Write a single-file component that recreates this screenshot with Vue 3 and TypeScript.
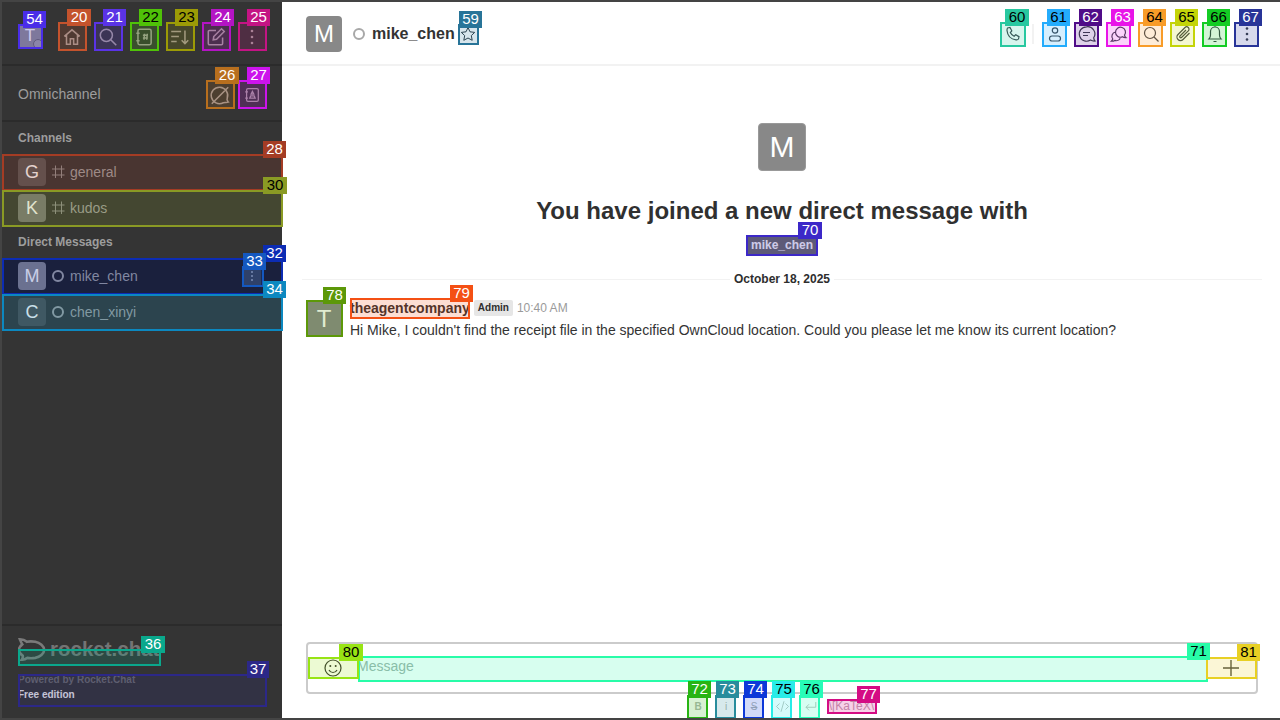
<script setup lang="ts">
interface Mark { n: string; x: number; y: number; w: number; h: number; c: string; dark?: boolean; lx: number; ly: number; lw: number }
const marks: Mark[] = [
  { n: '54', x: 18, y: 24, w: 25, h: 25, c: '#4a2de8', lx: 23, ly: 11, lw: 23 },
  { n: '20', x: 58, y: 22, w: 29, h: 29, c: '#c4532d', lx: 67, ly: 9, lw: 24 },
  { n: '21', x: 94, y: 22, w: 29, h: 29, c: '#5a33e6', lx: 103, ly: 9, lw: 23 },
  { n: '22', x: 130, y: 22, w: 29, h: 29, c: '#4fc208', dark: true, lx: 139, ly: 9, lw: 23 },
  { n: '23', x: 166, y: 22, w: 29, h: 29, c: '#9c9b06', dark: true, lx: 175, ly: 9, lw: 23 },
  { n: '24', x: 202, y: 22, w: 29, h: 29, c: '#b414c4', lx: 211, ly: 9, lw: 23 },
  { n: '25', x: 238, y: 22, w: 29, h: 29, c: '#c41484', lx: 247, ly: 9, lw: 23 },
  { n: '26', x: 206, y: 80, w: 29, h: 29, c: '#b86f1e', lx: 215, ly: 67, lw: 24 },
  { n: '27', x: 238, y: 80, w: 29, h: 29, c: '#cc14ec', lx: 247, ly: 67, lw: 23 },
  { n: '28', x: 2, y: 154, w: 281, h: 37, c: '#a43c24', lx: 263, ly: 141, lw: 23 },
  { n: '30', x: 2, y: 190, w: 281, h: 37, c: '#8a9a24', dark: true, lx: 263, ly: 177, lw: 24 },
  { n: '32', x: 2, y: 258, w: 281, h: 37, c: '#0c2cb4', lx: 263, ly: 245, lw: 23 },
  { n: '33', x: 242, y: 266, w: 22, h: 21, c: '#1458c0', lx: 243, ly: 253, lw: 23 },
  { n: '34', x: 2, y: 294, w: 281, h: 37, c: '#0c88c0', lx: 263, ly: 281, lw: 23 },
  { n: '36', x: 18, y: 649, w: 143, h: 17, c: '#0aa88c', lx: 141, ly: 636, lw: 24 },
  { n: '37', x: 18, y: 674, w: 249, h: 33, c: '#2c2888', lx: 247, ly: 661, lw: 22 },
  { n: '59', x: 458, y: 24, w: 21, h: 21, c: '#287498', lx: 459, ly: 11, lw: 23 },
  { n: '60', x: 1000, y: 22, w: 26, h: 25, c: '#28c8a0', dark: true, lx: 1005, ly: 9, lw: 24 },
  { n: '61', x: 1042, y: 22, w: 25, h: 25, c: '#24acfc', dark: true, lx: 1047, ly: 9, lw: 23 },
  { n: '62', x: 1074, y: 22, w: 25, h: 25, c: '#500c88', lx: 1079, ly: 9, lw: 23 },
  { n: '63', x: 1106, y: 22, w: 25, h: 25, c: '#e814e8', lx: 1111, ly: 9, lw: 23 },
  { n: '64', x: 1138, y: 22, w: 25, h: 25, c: '#f89c28', dark: true, lx: 1143, ly: 9, lw: 23 },
  { n: '65', x: 1170, y: 22, w: 25, h: 25, c: '#c4d408', dark: true, lx: 1175, ly: 9, lw: 23 },
  { n: '66', x: 1202, y: 22, w: 25, h: 25, c: '#14cc24', dark: true, lx: 1207, ly: 9, lw: 23 },
  { n: '67', x: 1234, y: 22, w: 25, h: 25, c: '#283498', lx: 1239, ly: 9, lw: 23 },
  { n: '70', x: 746, y: 235, w: 72, h: 21, c: '#3c28c8', lx: 798, ly: 222, lw: 24 },
  { n: '71', x: 358, y: 656, w: 850, h: 26, c: '#28fca8', dark: true, lx: 1187, ly: 643, lw: 23 },
  { n: '72', x: 687, y: 695, w: 21, h: 24, c: '#28b414', lx: 688, ly: 681, lw: 23 },
  { n: '73', x: 715, y: 695, w: 21, h: 24, c: '#288c9c', lx: 716, ly: 681, lw: 23 },
  { n: '74', x: 743, y: 695, w: 21, h: 24, c: '#0c38d8', lx: 744, ly: 681, lw: 23 },
  { n: '75', x: 771, y: 695, w: 21, h: 24, c: '#28ece8', dark: true, lx: 772, ly: 681, lw: 23 },
  { n: '76', x: 799, y: 695, w: 21, h: 24, c: '#28fcb8', dark: true, lx: 800, ly: 681, lw: 23 },
  { n: '77', x: 827, y: 699, w: 50, h: 15, c: '#d40c84', lx: 857, ly: 686, lw: 23 },
  { n: '78', x: 306, y: 300, w: 37, h: 37, c: '#5c9808', lx: 323, ly: 287, lw: 23 },
  { n: '79', x: 350, y: 298, w: 120, h: 21, c: '#f45014', lx: 450, ly: 285, lw: 23 },
  { n: '80', x: 308, y: 657, w: 51, h: 22, c: '#98e414', dark: true, lx: 339, ly: 644, lw: 24 },
  { n: '81', x: 1206, y: 657, w: 51, h: 22, c: '#e8d024', dark: true, lx: 1237, ly: 644, lw: 23 },
]
const tint = (c: string): string => c + '30'
</script>

<template>
  <div class="frame">
    <aside class="side">
      <div class="top-bar">
        <div class="me"><span class="me-t">T</span><span class="me-dot"></span></div>
        <div class="tools">
          <span class="tool"><svg viewBox="0 0 20 20"><path d="M3 9.500 10 3.500l7 6M5 8v8.500h3.500v-5h3v5H15V8" /></svg></span>
          <span class="tool"><svg viewBox="0 0 20 20"><circle cx="8.500" cy="8.500" r="5.500" /><path d="m12.500 12.500 5 5" /></svg></span>
          <span class="tool"><svg viewBox="0 0 20 20"><rect x="4.500" y="3" width="12" height="14" rx="1.500" /><path d="M3 6.500h3M3 13.500h3M9 8.500h4.500M9 11h4.500M10.500 7l-.5 5.500M13 7l-.5 5.500" /></svg></span>
          <span class="tool"><svg viewBox="0 0 20 20"><path d="M2 5h9M2 9.500h7M2 14h5M14.500 4v12M11.500 13l3 3 3-3" /></svg></span>
          <span class="tool"><svg viewBox="0 0 20 20"><path d="M16 10.500V16a1 1 0 0 1-1 1H4a1 1 0 0 1-1-1V5a1 1 0 0 1 1-1h6" /><path d="m8 9.500 7-7 2.500 2.500-7 7-3 .5z" /></svg></span>
          <span class="tool"><svg viewBox="0 0 20 20"><circle class="f" cx="10" cy="4.500" r="1.200" /><circle class="f" cx="10" cy="10" r="1.200" /><circle class="f" cx="10" cy="15.500" r="1.200" /></svg></span>
        </div>
      </div>
      <div class="omni">
        <span class="omni-t">Omnichannel</span>
        <div class="omni-tools">
          <span class="tool"><svg viewBox="0 0 20 20"><path d="M17 15.500c-1-1-.8-1.500-.4-2.700A7.500 7.500 0 1 0 13 17c1.500-.5 3 .2 4.500-.5-.3-.2-.4-.6-.5-1zM2.500 18 17.500 3" /></svg></span>
          <span class="tool tool-s"><svg viewBox="0 0 20 20"><rect x="4" y="3" width="13" height="14" rx="1.500" /><path d="M2.500 6.500h3M2.500 13.500h3M7.500 13.500h6l-1-2.500h-4zM10.500 6l-1.500 3h3z" /></svg></span>
        </div>
      </div>
      <div class="rooms">
        <div class="head">Channels</div>
        <div class="room"><span class="av av-g">G</span><svg class="ic" viewBox="0 0 14 14"><path d="M3.500 .5v12.500M9.500 .5v12.500M0 4h12.500M0 10h12.500" /></svg><span class="name">general</span></div>
        <div class="room"><span class="av av-k">K</span><svg class="ic" viewBox="0 0 14 14"><path d="M3.500 .5v12.500M9.500 .5v12.500M0 4h12.500M0 10h12.500" /></svg><span class="name">kudos</span></div>
        <div class="head">Direct Messages</div>
        <div class="room room-on"><span class="av av-m">M</span><span class="ring"></span><span class="name">mike_chen</span><span class="kebab"><i></i><i></i><i></i></span></div>
        <div class="room"><span class="av av-c">C</span><span class="ring"></span><span class="name">chen_xinyi</span></div>
      </div>
      <div class="foot">
        <div class="logo">
          <svg viewBox="0 0 30 24" class="logo-mark"><path d="M2 1.500c3 0 5.500 1 7.500 2.800 2-.5 6-.6 9 0 5 1 9.500 4.500 9.500 8.700s-4.500 7.500-9.500 8.500c-3 .5-6 .5-8.500 0-1.500 1-3.500 2-6 2 1-1.500 1.500-3 1-4.500C2.500 17.500 1 15.500 1 13c0-2.500 1.500-4.500 3.500-6C3.500 5.500 2.800 3.500 2 1.500z" /><circle class="dot" cx="10" cy="13" r="1" /><circle class="dot" cx="15" cy="13" r="1" /><circle class="dot" cx="20" cy="13" r="1" /></svg>
          <span class="logo-t">rocket.chat</span>
        </div>
        <div class="power">Powered by Rocket.Chat</div>
        <div class="free">Free edition</div>
      </div>
    </aside>
    <main class="main">
      <header class="hdr">
        <div class="hdr-left">
          <span class="hav">M</span>
          <span class="hring"></span>
          <span class="hname">mike_chen</span>
          <span class="star"><svg viewBox="0 0 16 16"><path d="m8 1.500 2 4.300 4.700.6-3.400 3.200.9 4.700L8 12l-4.200 2.300.9-4.700L1.300 6.400 6 5.800z" /></svg></span>
        </div>
        <div class="hdr-right">
          <span class="hic hic-a"><svg viewBox="0 0 20 20"><path d="M4.500 4 7 3.500l1.800 3.300-1.500 1.700c.8 1.700 2.100 3 3.800 3.800l1.600-1.500 3.300 1.800-.5 2.400c-.6.800-1.500 1-2.500.8C7.500 15.200 4.500 11.500 4 6.500c0-1 0-1.800.5-2.500z" /></svg></span>
          <span class="sep"></span>
          <span class="hic"><svg viewBox="0 0 20 20"><circle cx="10" cy="6.500" r="2.700" /><rect x="4.500" y="12" width="11" height="5" rx="2.500" /></svg></span>
          <span class="hic"><svg viewBox="0 0 20 20"><path d="M9.500 2.800a7.200 7.200 0 1 0 4 13.200c1.200.7 3 1.200 4.500 1-.7-.8-1.200-2-1.300-3.200A7.200 7.200 0 0 0 9.500 2.800zM6 8.500h7M6 11.500h5" /></svg></span>
          <span class="hic"><svg viewBox="0 0 20 20"><path d="M6.500 8.200a5 5 0 1 1 9 3c.2 1 .8 2 1.500 2.500-1.300.2-2.600-.2-3.500-.9a5 5 0 0 1-7-4.600zM6.500 8a4.400 4.400 0 0 0-2.700 7c-.3.900-.8 1.600-1.500 2.200 1.300.1 2.600-.2 3.500-.8 2.100.8 4.500-.3 5.400-2.200" /></svg></span>
          <span class="hic"><svg viewBox="0 0 20 20"><circle cx="9" cy="9" r="5.500" /><path d="m13 13 4.500 4.500" /></svg></span>
          <span class="hic"><svg viewBox="0 0 20 20"><path d="m16.500 9-6.500 6.500a3.500 3.500 0 0 1-5-5L12 3.500a2.300 2.300 0 0 1 3.300 3.300L8.500 13.500a1 1 0 0 1-1.500-1.500L13 6" /></svg></span>
          <span class="hic"><svg viewBox="0 0 20 20"><path d="M4 15c1-1 1.500-2 1.500-4V7.500a4.500 4.500 0 0 1 9 0V11c0 2 .5 3 1.500 4zM8.500 17.500h3M10 1.500V3" /></svg></span>
          <span class="hic"><svg viewBox="0 0 20 20"><circle class="f" cx="10" cy="4.500" r="1.300" /><circle class="f" cx="10" cy="10" r="1.300" /><circle class="f" cx="10" cy="15.500" r="1.300" /></svg></span>
        </div>
      </header>
      <section class="scroll">
        <div class="intro">
          <span class="big-av">M</span>
          <h1 class="title">You have joined a new direct message with</h1>
          <span class="chip">mike_chen</span>
        </div>
        <div class="divider"><span>October 18, 2025</span></div>
        <div class="msg">
          <span class="msg-av">T</span>
          <div class="msg-body">
            <div class="msg-head">
              <span class="author">theagentcompany</span>
              <span class="role">Admin</span>
              <span class="time">10:40 AM</span>
            </div>
            <div class="text">Hi Mike, I couldn't find the receipt file in the specified OwnCloud location. Could you please let me know its current location?</div>
          </div>
        </div>
      </section>
      <div class="composer">
        <div class="box">
          <span class="emoji"><svg viewBox="0 0 20 20"><circle cx="10" cy="10" r="8" /><path d="M6 12c1 2 2.500 2.500 4 2.500s3-.5 4-2.500" /><circle class="f" cx="7.300" cy="8" r="1" /><circle class="f" cx="12.700" cy="8" r="1" /></svg></span>
          <span class="ph">Message</span>
          <span class="plus"><svg viewBox="0 0 20 20"><path d="M10 2v16M2 10h16" /></svg></span>
        </div>
        <div class="fmt">
          <span class="fb fb-b">B</span>
          <span class="fb fb-i">i</span>
          <span class="fb fb-s">S</span>
          <span class="fb"><svg viewBox="0 0 20 20"><path d="m6 6-4 4 4 4M14 6l4 4-4 4M12 3 8 17" /></svg></span>
          <span class="fb"><svg viewBox="0 0 20 20"><path d="M17 4v7H4M8 7l-4 4 4 4" /></svg></span>
          <span class="katex">\[KaTeX\]</span>
        </div>
      </div>
    </main>
    <div class="marks" aria-hidden="true">
      <template v-for="m in marks" :key="m.n">
        <div class="mark" :style="{ left: m.x + 'px', top: m.y + 'px', width: m.w + 'px', height: m.h + 'px', borderColor: m.c, background: tint(m.c) }"></div>
      </template>
      <template v-for="m in marks" :key="'l' + m.n">
        <div class="mlabel" :class="{ dark: m.dark }" :style="{ left: m.lx + 'px', top: m.ly + 'px', width: m.lw + 'px', background: m.c }">{{ m.n }}</div>
      </template>
    </div>
  </div>
</template>

<style>
html, body { margin: 0; padding: 0; background: #fff; }
</style>

<style scoped>
.frame {
  width: 1280px; height: 720px; box-sizing: border-box; overflow: hidden; position: relative;
  display: flex; border: 2px solid #444; border-right-width: 0;
  font-family: "Liberation Sans", Arial, sans-serif; color: #2e2e2e; background: #fff;
}
.side { width: 280px; flex: none; background: #343434; display: flex; flex-direction: column; color: #9d9d9d; }
svg { fill: none; stroke: currentColor; stroke-width: 1.4; display: block; }
svg .f { fill: currentColor; stroke: none; }

.top-bar { height: 64px; box-sizing: border-box; display: flex; align-items: flex-start; padding: 21px 16px 0; border-bottom: 2px solid #2b2b2b; flex: none; }
.me { width: 24px; height: 24px; background: #8a8a8a; border-radius: 3px; position: relative; color: #eee; font-size: 17px; display: flex; align-items: center; justify-content: center; margin-top: 1px; flex: none; }
.me-dot { position: absolute; right: -1px; bottom: -1px; width: 10px; height: 10px; border-radius: 50%; background: #9a9a9a; border: 1px solid #666; box-sizing: border-box; }
.tools { display: flex; gap: 8px; margin-left: 16px; }
.tool { width: 28px; height: 28px; display: flex; align-items: center; justify-content: center; color: #a49a9a; }
.tool svg { width: 22px; height: 22px; }
.tool-s svg { width: 18px; height: 18px; }

.omni { height: 56px; box-sizing: border-box; display: flex; align-items: center; justify-content: space-between; padding: 0 16px; border-bottom: 2px solid #2b2b2b; flex: none; }
.omni-t { font-size: 14px; color: #9d9d9d; margin-top: 1px; }
.omni-tools { display: flex; gap: 4px; margin-top: 3px; }

.rooms { flex: 1; }
.head { height: 32px; line-height: 32px; padding-left: 16px; font-size: 12px; font-weight: 700; color: #9d9d9d; }
.room { height: 36px; display: flex; align-items: center; padding-left: 16px; position: relative; font-size: 14px; color: #9d9d9d; }
.room-on { background: #1e1e22; }
.av { width: 28px; height: 28px; border-radius: 4px; color: #f4f4f4; display: flex; align-items: center; justify-content: center; font-size: 18px; flex: none; }
.av-g { background: #555; }
.av-k { background: #767676; }
.av-m { background: #828288; }
.av-c { background: #4c4d4e; }
.ic { width: 14px; height: 14px; margin-left: 6px; stroke-width: 1; color: #8e8e8e; }
.ring { width: 8px; height: 8px; border: 2px solid #9d9d9d; border-radius: 50%; margin-left: 6px; flex: none; }
.name { margin-left: 4px; }
.ring + .name { margin-left: 6px; }
.kebab { position: absolute; right: 21px; top: 9px; width: 18px; height: 18px; display: flex; flex-direction: column; align-items: center; justify-content: center; gap: 2px; background: #404040; }
.kebab i { width: 2px; height: 2px; background: #b0b0b0; border-radius: 50%; }

.foot { height: 94px; box-sizing: border-box; border-top: 2px solid #2b2b2b; padding: 10px 16px 0; flex: none; }
.logo { display: flex; align-items: center; height: 25px; }
.logo-mark { width: 28px; height: 24px; stroke: #7a7a7a; stroke-width: 2.800; flex: none; }
.logo-mark .dot { fill: #7a7a7a; stroke: none; }
.logo-t { font-size: 20.500px; font-weight: 700; margin-left: 4px; color: #747474; }
.power { font-size: 10px; font-weight: 700; color: #6a6a6a; margin-top: 13px; line-height: 12px; }
.free { font-size: 10px; font-weight: 700; color: #e8e8e8; margin-top: 3px; line-height: 12px; }

.main { flex: 1; min-width: 0; display: flex; flex-direction: column; background: #fff; }
.hdr { height: 64px; box-sizing: border-box; border-bottom: 2px solid #f2f2f2; display: flex; align-items: center; justify-content: space-between; padding: 2px 23px 0 24px; flex: none; }
.hdr-left { display: flex; align-items: center; }
.hav { width: 36px; height: 36px; background: #888; border-radius: 4px; color: #fff; font-size: 24px; display: flex; align-items: center; justify-content: center; }
.hring { width: 8px; height: 8px; border: 2px solid #a8a8a8; border-radius: 50%; margin-left: 11px; }
.hname { font-size: 16px; font-weight: 700; margin-left: 7px; color: #333; }
.star { width: 17px; height: 17px; margin-left: 5px; display: flex; align-items: center; justify-content: center; color: #2e3a42; }
.star svg { width: 16px; height: 16px; stroke-width: 1; }
.hdr-right { display: flex; align-items: center; }
.hic { width: 21px; height: 21px; margin-left: 11px; display: flex; align-items: center; justify-content: center; color: #3b4048; }
.hic-a { margin-left: 0; }
.hic svg { width: 20px; height: 20px; stroke-width: 1.2; flex: none; }
.sep { width: 2px; height: 20px; background: #f2f2f2; margin-left: 8.500px; margin-right: -1px; }

.scroll { flex: 1; min-height: 0; }
.intro { display: flex; flex-direction: column; align-items: center; padding: 57px 0 0 2px; }
.big-av { width: 48px; height: 48px; background: #888; border-radius: 4px; color: #fff; font-size: 30px; display: flex; align-items: center; justify-content: center; border: 1px solid #999; box-sizing: border-box; }
.title { font-size: 24px; font-weight: 700; line-height: 32px; margin: 24px 0 0; color: #303030; }
.chip { font-size: 12px; font-weight: 700; line-height: 21px; background: #666; color: #f0f0f0; padding: 0 3px; margin-top: 8px; }
.divider { margin: 13px 18px 0 20px; height: 20px; display: flex; align-items: center; justify-content: center; position: relative; font-size: 12px; font-weight: 700; color: #2e2e2e; }
.divider::before { content: ""; position: absolute; left: 0; right: 0; top: 10px; height: 1px; background: #f2f2f2; }
.divider span { position: relative; background: #fff; padding: 0 4px; }
.msg { display: flex; padding: 0 24px; margin-top: 12px; }
.msg-av { width: 36px; height: 36px; background: #888; color: #fff; font-size: 24px; display: flex; align-items: center; justify-content: center; flex: none; }
.msg-body { margin-left: 8px; margin-top: -3px; }
.msg-head { display: flex; align-items: center; height: 20px; }
.author { font-size: 14px; font-weight: 700; color: #2e2e2e; }
.role { font-size: 10px; font-weight: 700; background: #e6e6e6; color: #2e2e2e; margin-left: 4px; border-radius: 2px; padding: 0 4px; line-height: 16px; }
.time { font-size: 12px; color: #9a9a9a; margin-left: 4px; }
.text { font-size: 14px; line-height: 20px; margin-top: 2px; color: #333; }

.composer { flex: none; height: 76px; }
.box { margin: 0 22px 0 24px; border: 2px solid #cbcbcb; border-radius: 4px; display: flex; align-items: center; height: 48px; }
.emoji { width: 50px; display: flex; justify-content: center; color: #2e2e2e; }
.emoji svg { width: 20px; height: 20px; stroke-width: 1.2; }
.ph { flex: 1; font-size: 14px; color: #a0b0a8; margin-left: -1px; margin-top: -4px; }
.plus { width: 50px; display: flex; justify-content: center; color: #4a4a40; }
.plus svg { width: 20px; height: 20px; stroke-width: 1.400; }
.fmt { display: flex; justify-content: center; align-items: center; height: 24px; gap: 8px; padding-left: 4px; }
.fb { width: 20px; height: 24px; display: flex; align-items: center; justify-content: center; font-size: 10px; color: #b0b8b0; }
.fb svg { width: 15px; height: 15px; stroke-width: 1.100; }
.fb-b { font-weight: 700; }
.fb-s { text-decoration: line-through; }
.katex { font-size: 12px; color: #c0a0b0; width: 50px; text-align: center; }

.marks { position: absolute; left: -2px; top: -2px; width: 1280px; height: 720px; pointer-events: none; }
.mark { position: absolute; box-sizing: border-box; border: 2px solid; }
.mlabel { position: absolute; height: 17px; line-height: 16px; font-size: 15px; color: #fff; text-align: center; }
.mlabel.dark { color: #000; }
</style>
